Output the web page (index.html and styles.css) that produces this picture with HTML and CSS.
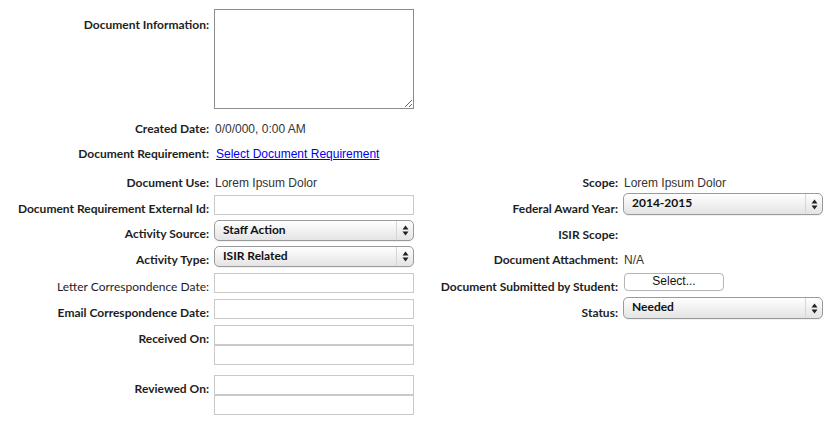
FILE: index.html
```html
<!DOCTYPE html>
<html>
<head>
<meta charset="utf-8">
<link rel="stylesheet" href="styles.css">
</head>
<body>
<div class="form">
  <div class="row row-info">
    <span class="lbl lbl-info">Document Information:</span>
    <textarea class="ta"></textarea>
  </div>
  <div class="row row-text m12">
    <span class="lbl">Created Date:</span>
    <span class="val">0/0/000, 0:00 AM</span>
  </div>
  <div class="row row-text m9">
    <span class="lbl">Document Requirement:</span>
    <a class="link" href="#">Select Document Requirement</a>
  </div>
  <div class="cols">
    <div class="col col-left">
      <div class="row row-text">
        <span class="lbl">Document Use:</span>
        <span class="val">Lorem Ipsum Dolor</span>
      </div>
      <div class="row m4">
        <span class="lbl lbl-in">Document Requirement External Id:</span>
        <input class="inp" type="text">
      </div>
      <div class="row m5">
        <span class="lbl lbl-in">Activity Source:</span>
        <div class="sel"><span class="sel-text">Staff Action</span><span class="sel-btn"><svg width="7" height="11" viewBox="0 0 7 11"><path d="M0.5 4.5 L3.5 0.5 L6.5 4.5 Z M0.5 6.5 L3.5 10.5 L6.5 6.5 Z" fill="#222"/></svg></span></div>
      </div>
      <div class="row m5">
        <span class="lbl lbl-in">Activity Type:</span>
        <div class="sel"><span class="sel-text">ISIR Related</span><span class="sel-btn"><svg width="7" height="11" viewBox="0 0 7 11"><path d="M0.5 4.5 L3.5 0.5 L6.5 4.5 Z M0.5 6.5 L3.5 10.5 L6.5 6.5 Z" fill="#222"/></svg></span></div>
      </div>
      <div class="row m6">
        <span class="lbl lbl-in lbl-normal">Letter Correspondence Date:</span>
        <input class="inp" type="text">
      </div>
      <div class="row m6">
        <span class="lbl lbl-in">Email Correspondence Date:</span>
        <input class="inp" type="text">
      </div>
      <div class="row m6">
        <span class="lbl lbl-in">Received On:</span>
        <div class="stack"><input class="inp" type="text"><input class="inp" type="text"></div>
      </div>
      <div class="row m10">
        <span class="lbl lbl-in">Reviewed On:</span>
        <div class="stack"><input class="inp" type="text"><input class="inp" type="text"></div>
      </div>
    </div>
    <div class="col col-right">
      <div class="row row-r row-text">
        <span class="lbl">Scope:</span>
        <span class="val">Lorem Ipsum Dolor</span>
      </div>
      <div class="row row-r m2">
        <span class="lbl lbl-sel">Federal Award Year:</span>
        <div class="sel sel-r"><span class="sel-text">2014-2015</span><span class="sel-btn"><svg width="7" height="11" viewBox="0 0 7 11"><path d="M0.5 4.5 L3.5 0.5 L6.5 4.5 Z M0.5 6.5 L3.5 10.5 L6.5 6.5 Z" fill="#222"/></svg></span></div>
      </div>
      <div class="row row-r row-text m12">
        <span class="lbl">ISIR Scope:</span>
        <span class="val"></span>
      </div>
      <div class="row row-r row-text m9">
        <span class="lbl">Document Attachment:</span>
        <span class="val">N/A</span>
      </div>
      <div class="row row-r m5">
        <span class="lbl lbl-in">Document Submitted by Student:</span>
        <div><button class="btn" type="button">Select...</button></div>
      </div>
      <div class="row row-r m6">
        <span class="lbl lbl-sel">Status:</span>
        <div class="sel sel-r"><span class="sel-text">Needed</span><span class="sel-btn"><svg width="7" height="11" viewBox="0 0 7 11"><path d="M0.5 4.5 L3.5 0.5 L6.5 4.5 Z M0.5 6.5 L3.5 10.5 L6.5 6.5 Z" fill="#222"/></svg></span></div>
      </div>
    </div>
  </div>
</div>
</body>
</html>
```

FILE: styles.css
```css
html, body {
  margin: 0;
  padding: 0;
  background: #fff;
}

.form {
  padding: 9px 0 0 8px;
  font-family: Lato, "Liberation Sans", sans-serif;
  font-size: 12px;
  color: #222;
}

.row {
  display: grid;
  grid-template-columns: 201px 200px;
  column-gap: 5px;
  align-items: start;
}

.row-r {
  grid-template-columns: 198px 200px;
}

.row-text {
  line-height: 16px;
}

.lbl {
  text-align: right;
  font-weight: bold;
  line-height: 16px;
  color: #1e1e1e;
  white-space: nowrap;
}

.lbl-info {
  padding-top: 8px;
}

.lbl-in {
  padding-top: 6px;
  margin-bottom: -12px;
}

.lbl-sel {
  padding-top: 8px;
  margin-bottom: -12px;
}

.lbl-normal {
  font-weight: normal;
}

.val {
  font-family: "Liberation Sans", Arial, sans-serif;
  font-size: 12px;
  color: #333;
  line-height: 16px;
  padding-left: 1px;
}

.link {
  font-family: "Liberation Sans", Arial, sans-serif;
  font-size: 12px;
  color: #0000ee;
  text-decoration: underline;
  line-height: 16px;
  padding-left: 2px;
}

.ta {
  box-sizing: border-box;
  width: 200px;
  height: 100px;
  margin: 0;
  border: 1px solid #8c8c8c;
  display: block;
  resize: both;
}

.inp {
  box-sizing: border-box;
  display: block;
  width: 200px;
  height: 20px;
  margin: 0;
  padding: 0 3px;
  border: 1px solid #c9c9c9;
  background: #fff;
}

.stack {
  display: flex;
  flex-direction: column;
}

.sel {
  box-sizing: border-box;
  width: 200px;
  height: 21px;
  border: 1px solid #9a9a9a;
  border-radius: 5px;
  background: linear-gradient(#ffffff, #f1f1f1 50%, #e4e4e4);
  display: flex;
  align-items: center;
  box-shadow: 0 1px 0 rgba(0, 0, 0, 0.05);
}

.sel-r {
  height: 22px;
}

.sel-text {
  flex: 1;
  padding-left: 8px;
  font-family: Lato, "Liberation Sans", sans-serif;
  font-size: 12px;
  font-weight: bold;
  color: #111;
  line-height: 14px;
  padding-bottom: 2px;
}

.sel-btn {
  width: 16px;
  align-self: stretch;
  border-left: 1px solid #d6d6d6;
  display: flex;
  align-items: center;
  justify-content: center;
}

.sel-btn svg {
  display: block;
}

.btn {
  box-sizing: border-box;
  width: 100px;
  height: 18px;
  margin: 0 0 0 1px;
  padding: 0 0 2px;
  border: 1px solid #b4b4b4;
  border-radius: 4px;
  background: #fff;
  font-family: "Liberation Sans", Arial, sans-serif;
  font-size: 12px;
  color: #111;
  line-height: 14px;
}

.cols {
  display: flex;
  margin-top: 13px;
}

.col-left {
  width: 406px;
}

.col-right {
  margin-left: 6px;
}

.m2 { margin-top: 2px; }
.m4 { margin-top: 4px; }
.m5 { margin-top: 5px; }
.m6 { margin-top: 6px; }
.m9 { margin-top: 9px; }
.m10 { margin-top: 10px; }
.m12 { margin-top: 12px; }
```
